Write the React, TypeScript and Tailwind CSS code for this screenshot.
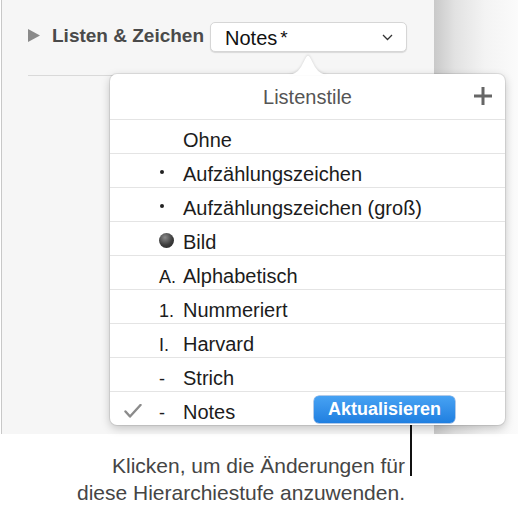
const rows: { marker: string; label: string }[] = [
  { marker: "", label: "Ohne" },
  { marker: "dot", label: "Aufzählungszeichen" },
  { marker: "dot", label: "Aufzählungszeichen (groß)" },
  { marker: "image", label: "Bild" },
  { marker: "A.", label: "Alphabetisch" },
  { marker: "1.", label: "Nummeriert" },
  { marker: "I.", label: "Harvard" },
  { marker: "-", label: "Strich" },
];

const Marker = ({ kind }: { kind: string }) => {
  if (kind === "dot") {
    return <span className="ml-[1px] mb-[5px] block w-[4px] h-[4px] rounded-full bg-[#222]" />;
  }
  if (kind === "image") {
    return (
      <span className="mb-[5px] block w-[15px] h-[15px] rounded-full bg-[radial-gradient(circle_at_40%_30%,#8a8a8a,#3c3c3c_55%,#222)]" />
    );
  }
  return <span className="text-[18px] mt-[1px]">{kind}</span>;
};

const Row = ({ marker, label, checked }: { marker: string; label: string; checked?: boolean }) => (
  <div className="h-[34px] border-t border-[#e4e4e4] flex items-center">
    <div className="w-[49px] pl-[14px] pt-[4px]">
      {checked && (
        <svg width="18" height="14" viewBox="0 0 18 14">
          <path d="M1.5 7.5 L6 12.5 L16.5 1" fill="none" stroke="#8b8b8b" strokeWidth="2.4" strokeLinecap="round" strokeLinejoin="round" />
        </svg>
      )}
    </div>
    <div className="flex items-end pt-[8px]">
      <div className="w-[24px] h-[23px] flex items-center text-[#1c1c1c]">
        <Marker kind={marker} />
      </div>
      <span className="text-[#1c1c1c] leading-[23px]">{label}</span>
    </div>
    {checked && (
      <button className="ml-auto mr-[50px] mt-[2px] w-[141px] h-[27px] rounded-[5px] bg-gradient-to-b from-[#47a2f3] to-[#1f7fe0] text-white font-bold text-[18px] leading-[27px] shadow-[0_0_0_0.5px_rgba(0,80,180,0.6)]">
        Aktualisieren
      </button>
    )}
  </div>
);

export default function App() {
  return (
    <div className="relative w-[518px] h-[512px] bg-white overflow-hidden font-['Liberation_Sans',Arial,sans-serif] text-[20px]">
      <div className="flex h-[434px]">
        <div className="ml-px w-[433px] bg-[#f6f6f6] border-l border-[#c8c8c8]">
          <div className="flex items-center pt-[22px] pl-[26px]">
            <svg width="12" height="13" viewBox="0 0 12 13" className="mb-[3px]">
              <path d="M0 0 L12 6.5 L0 13 Z" fill="#8a8a8a" />
            </svg>
            <span className="ml-[12px] mb-[2px] font-bold text-[19px] text-[#4a4a4a]">Listen &amp; Zeichen</span>
            <div className="ml-[6px] w-[197px] h-[30px] bg-white rounded-[5px] border border-[#d6d6d6] shadow-[0_1px_1px_rgba(0,0,0,0.12)] flex items-center pl-[14px] pr-[13px]">
              <span className="text-[#111] pt-[2px]">Notes</span>
              <span className="ml-[3px] text-[#111] text-[19px] leading-none">*</span>
              <svg width="11" height="7" viewBox="0 0 11 7" className="ml-auto">
                <path d="M1 1 L5.5 5.5 L10 1" fill="none" stroke="#333" strokeWidth="1.3" />
              </svg>
            </div>
          </div>
          <div className="mt-[22px] ml-[26px] h-px bg-[#d9d9d9]" />
        </div>
        <div className="flex-1 bg-[linear-gradient(to_right,#c9c9c9,#e2e2e2_25%,#f3f3f3_60%,#fbfbfb)]" />
      </div>

      <div className="w-[405px] pt-[18px] text-right text-[21px] leading-[27px] text-[#454545]">
        <p>Klicken, um die Änderungen für</p>
        <p>diese Hierarchiestufe anzuwenden.</p>
      </div>

      {/* callout line */}
      <div className="absolute left-[410px] top-[423px] w-[2px] h-[53px] bg-[#111]" />

      {/* popover */}
      <div className="absolute left-[110px] top-[74px] w-[395px] h-[351px] bg-white rounded-[7px] shadow-[0_0_0_1px_rgba(0,0,0,0.08),0_3px_10px_rgba(0,0,0,0.22)]">
        <svg width="42" height="22" viewBox="0 0 42 22" className="absolute left-[177px] -top-[20px] drop-shadow-[0_-1px_1px_rgba(0,0,0,0.12)]">
          <path d="M0 21 Q9 21 14 13 L19 3.5 Q21 0 23 3.5 L28 13 Q33 21 42 21 Z" fill="#fff" />
        </svg>
        <div className="relative h-[45px] flex items-center justify-center pt-[1px]">
          <span className="text-[#555]">Listenstile</span>
          <svg width="18" height="18" viewBox="0 0 18 18" className="absolute right-[13px] top-[13px]">
            <path d="M9 0 V18 M0 9 H18" stroke="#666" strokeWidth="3" />
          </svg>
        </div>
        {rows.map((r) => (
          <Row key={r.label} marker={r.marker} label={r.label} />
        ))}
        <Row marker="-" label="Notes" checked />
      </div>
    </div>
  );
}
